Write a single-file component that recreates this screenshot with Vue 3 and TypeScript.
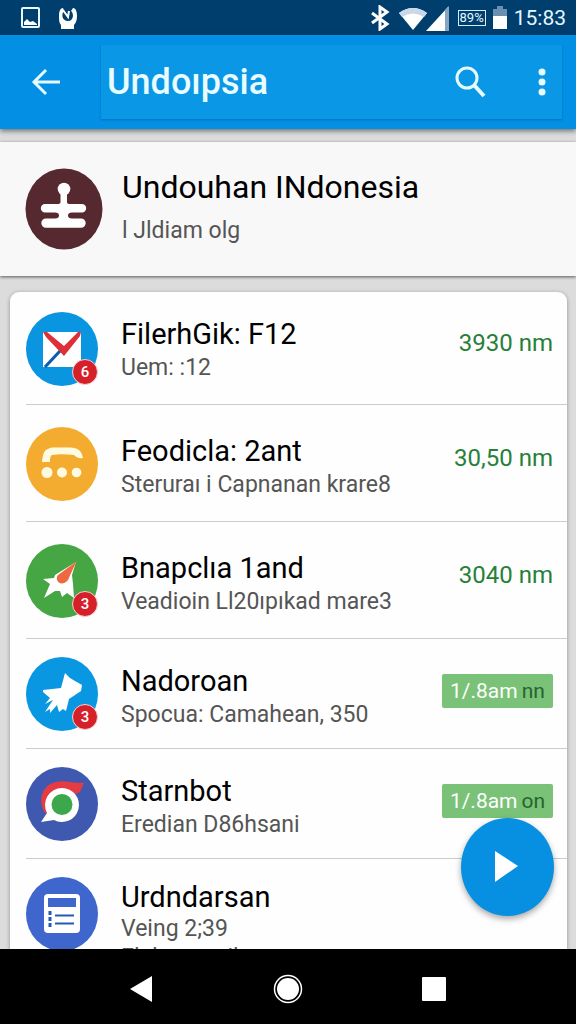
<script setup lang="ts">
type IconName = 'mail' | 'phone' | 'rocket' | 'bird' | 'ring' | 'document'

interface Row {
  icon: IconName
  color: string
  title: string
  detail: string
  extra?: string
  badge?: string
  value?: string
  tag?: [string, string]
}

const rows: Row[] = [
  { icon: 'mail', color: '#0a95e0', title: 'FilerhGik: F12', detail: 'Uem: :12', badge: '6', value: '3930 nm' },
  { icon: 'phone', color: '#f4ac30', title: 'Feodicla: 2ant', detail: 'Steruraı i Capnanan krare8', value: '30,50 nm' },
  { icon: 'rocket', color: '#46a644', title: 'Bnapclıa 1and', detail: 'Veadioin Ll20ıpıkad mare3', badge: '3', value: '3040 nm' },
  { icon: 'bird', color: '#0a97e1', title: 'Nadoroan', detail: 'Spocua: Camahean, 350', badge: '3', tag: ['1/.8am', 'nn'] },
  { icon: 'ring', color: '#4059b0', title: 'Starnbot', detail: 'Eredian D86hsani', tag: ['1/.8am', 'on'] },
  { icon: 'document', color: '#3e66cd', title: 'Urdndarsan', detail: 'Veing 2;39', extra: 'Elabsananil' },
]
</script>

<template>
  <div class="screen">
    <div class="status">
      <svg class="status-left" viewBox="0 0 60 26" aria-hidden="true">
        <rect x="2" y="3" width="17" height="19" rx="1" fill="none" stroke="#e9f8ff" stroke-width="2" />
        <path d="M4 20v-3l3-3 3 3 3-1 4 3v1z" fill="#fff" />
        <path d="M43 3c-3 0-4 4-4 8s0 7 2 9v4h13v-4c2-2 3-5 3-9s-1-8-4-8l-2 3c3 2 3 10-3 10s-7-7-4-10z" fill="#fff" />
        <path d="M43 5l5 7 1-6" fill="none" stroke="#fff" stroke-width="2" />
      </svg>
      <div class="status-right">
        <svg class="status-signals" viewBox="0 0 84 26" aria-hidden="true">
          <path d="M4 8l15 11-7 5V2l7 5L4 18" fill="none" stroke="#fff" stroke-width="3" />
          <path d="M31 8q14-10 28 0L45 25z" fill="#fff" />
          <path d="M31 8q14-10 28 0l-3 4q-11-7-22 0z" fill="#c9d8e8" />
          <path d="M80 2v24H58z" fill="#fff" />
          <path d="M77 5l4-4v25h-4z" fill="#87a5c3" />
        </svg>
        <span class="percent">89%</span>
        <svg class="battery" viewBox="0 0 16 24" aria-hidden="true">
          <path d="M1 3h4V0h6v3h4v8H1z" fill="#6c8fb1" />
          <path d="M1 10h14v13H1z" fill="#fff" />
        </svg>
        <time>15:83</time>
      </div>
    </div>

    <header class="appbar">
      <button class="icon-btn back" type="button" aria-label="Back">
        <svg width="30" height="30" viewBox="0 0 30 30"><path d="M29 15H3M15 3L3 15l12 12" fill="none" stroke="#e6fbff" stroke-width="3" /></svg>
      </button>
      <div class="appbar-panel">
        <h1>Undoıpsia</h1>
        <button class="icon-btn" type="button" aria-label="Search">
          <svg width="32" height="32" viewBox="0 0 32 32" fill="none" stroke="#e6fbff"><circle cx="13" cy="12" r="10" stroke-width="3" /><path d="M20 19l10 11" stroke-width="4" /></svg>
        </button>
        <button class="icon-btn" type="button" aria-label="More options">
          <svg width="10" height="30" viewBox="0 0 10 30" fill="#e6fbff"><circle cx="5" cy="5" r="3.500" /><circle cx="5" cy="15" r="3.500" /><circle cx="5" cy="25" r="3.500" /></svg>
        </button>
      </div>
    </header>

    <main>
      <section class="intro">
        <svg class="intro-icon" viewBox="0 0 78 82" aria-hidden="true">
          <ellipse cx="39" cy="41" rx="38.500" ry="40.500" fill="#55292f" />
          <g fill="#fff">
            <circle cx="39" cy="21" r="6.300" />
            <path d="M35.500 22h6.500v12q0 2 3 2h12a4.200 4.200 0 0 1 0 8.400H47q-4 0-4 3t4 3h9a4.700 4.700 0 0 1 0 9.400H21a4.700 4.700 0 0 1 0-9.400h9q4 0 4-3t-4-3H20a4.200 4.200 0 0 1 0-8.400h12.500q3 0 3-2z" />
          </g>
        </svg>
        <div>
          <h2>Undouhan INdonesia</h2>
          <p>l Jldiam olg</p>
        </div>
      </section>

      <ul class="card">
        <li v-for="row in rows" :key="row.title" class="row">
          <div class="avatar">
            <svg viewBox="0 0 72 74" aria-hidden="true">
              <ellipse cx="36" cy="37" rx="36" ry="37" :fill="row.color" />
              <g v-if="row.icon === 'mail'">
                <path d="M17 20h38v35H17z" fill="#fff" />
                <path d="M19 55l15-16" stroke="#0b5db0" stroke-width="3" />
                <path d="M17 20h4l17 14 14-14h3l-1 4-16 20-18-19z" fill="#dd2f38" />
              </g>
              <g v-else-if="row.icon === 'phone'" fill="#fffbe0">
                <path d="M16 35c1-9 2-13 10-14.500h18c8 0 12 4 13 10.500-4 1-7-1-9-3-8-1-16-1-22 0-2 1-2 4-2 7z" />
                <circle cx="21" cy="45.500" r="5.500" /><circle cx="36" cy="45.500" r="5" /><circle cx="50.500" cy="45.500" r="4.800" />
              </g>
              <g v-else-if="row.icon === 'rocket'">
                <path d="M50 18L29 31l-1 3-11 1 7 5-6 14 11-7h5l2 6 5-4 7 5-1-14-1-9z" fill="#fff" />
                <path d="M50.500 17.500L32 31c-3 4 0 8 3.500 8.500 4 0 7-3 8-7z" fill="#ee6842" />
              </g>
              <path v-else-if="row.icon === 'bird'" d="M39 16l5 5 5 3 7 4-1 6-12 8-3 12-3-2-4 3-2-7-7 8v-4l-5 3 8-12-8 4 5-6-7-6v-2l18-2z" fill="#fff" />
              <g v-else-if="row.icon === 'ring'">
                <path d="M20 47C11 36 15 18 30 15c8-2 14 1 28 1l-4 9-7 3-18 5z" fill="#e43c42" />
                <path d="M36 21a17 17 0 1 1-8 32l-13 2 6-9a17 17 0 0 1 15-25z" fill="#fff" />
                <circle cx="36" cy="37.500" r="10.500" fill="#3da84b" />
              </g>
              <g v-else>
                <rect x="18" y="17" width="36" height="39" rx="4" fill="#fff" />
                <path d="M22 21h28v9H22z" :fill="row.color" />
                <path d="M29 38.500h19M29 46.500h19" stroke="#2559b8" stroke-width="2" />
                <path d="M24 34v17" stroke="#2559b8" stroke-width="3" stroke-dasharray="4 2" />
              </g>
            </svg>
            <span v-if="row.badge" class="badge">{{ row.badge }}</span>
          </div>
          <div class="text">
            <h3>{{ row.title }}</h3>
            <p>{{ row.detail }}</p>
            <p v-if="row.extra">{{ row.extra }}</p>
          </div>
          <span v-if="row.value" class="value">{{ row.value }}</span>
          <span v-if="row.tag" class="tag">{{ row.tag[0] }}<span>{{ row.tag[1] }}</span></span>
        </li>
      </ul>

      <button class="fab" type="button" aria-label="Play">
        <svg width="28" height="32" viewBox="0 0 28 32"><path d="M1 0l23 15L1 31z" fill="#fff" /></svg>
      </button>
    </main>

    <nav>
      <button type="button" aria-label="Back">
        <svg width="24" height="28" viewBox="0 0 24 28"><path d="M22 1v26L0 14z" fill="#fff" /></svg>
      </button>
      <button type="button" aria-label="Home">
        <svg width="30" height="30" viewBox="0 0 30 30"><circle cx="15" cy="15" r="13.500" fill="none" stroke="#fff" stroke-width="1.500" /><circle cx="15" cy="15" r="11" fill="#fff" /></svg>
      </button>
      <button type="button" aria-label="Recent apps">
        <svg width="24" height="24" viewBox="0 0 24 24"><rect width="24" height="24" rx="1" fill="#fff" /></svg>
      </button>
    </nav>
  </div>
</template>

<style>
body {
  margin: 0;
}
</style>

<style scoped>
* {
  box-sizing: border-box;
}

.screen {
  display: flex;
  flex-direction: column;
  height: 100vh;
  overflow: hidden;
  font-family: Roboto, "Liberation Sans", sans-serif;
  color: #000;
}

h1, h2, h3, p, ul {
  margin: 0;
  padding: 0;
  font-weight: 400;
}

button {
  display: grid;
  place-items: center;
  padding: 0;
  border: 0;
  background: none;
  cursor: pointer;
}

svg {
  display: block;
}

.status {
  flex: none;
  display: flex;
  justify-content: space-between;
  align-items: center;
  height: 35px;
  padding: 0 10px 0 20px;
  background: #003e6e;
  color: #e4f7ff;
}

.status-left {
  width: 60px;
  height: 26px;
}

.status-right {
  display: flex;
  align-items: center;
  gap: 6px;
}

.status-signals {
  width: 84px;
  height: 26px;
}

.percent {
  padding: 0 1px;
  border: 1px solid #d5ecf8;
  font-size: 13px;
  line-height: 14px;
}

.battery {
  width: 16px;
  height: 24px;
}

.status time {
  font-size: 21px;
  line-height: 26px;
}

.appbar {
  flex: none;
  position: relative;
  z-index: 1;
  display: flex;
  align-items: center;
  height: 94px;
  padding: 0 14px 0 20px;
  background: #028fe4;
  box-shadow: 0 2px 5px rgba(0, 0, 0, 0.5);
}

.icon-btn {
  width: 52px;
  height: 52px;
}

.appbar-panel {
  flex: 1;
  display: flex;
  align-items: center;
  height: 74px;
  margin-left: 29px;
  padding-left: 6px;
  background: #0a97e6;
  box-shadow: 0 1px 2px rgba(0, 70, 130, 0.4);
}

.appbar-panel h1 {
  flex: 1;
  color: #e9fcff;
  font-size: 36px;
  font-weight: 500;
  line-height: 44px;
}

.appbar-panel .icon-btn:last-child {
  width: 40px;
  margin-left: 26px;
}

main {
  flex: 1;
  position: relative;
  min-height: 0;
  padding-top: 13px;
  overflow: hidden;
  background: #dcdcdd;
}

.intro {
  display: flex;
  align-items: center;
  gap: 19px;
  height: 134px;
  margin-bottom: 16px;
  padding: 0 24px 0 25px;
  background: #f8f8f8;
  box-shadow: 0 1px 3px rgba(0, 0, 0, 0.6);
}

.intro-icon {
  width: 78px;
  height: 82px;
}

.intro h2 {
  font-size: 32px;
  line-height: 44px;
}

.intro p {
  color: #555;
  font-size: 23px;
  line-height: 44px;
}

.card {
  margin: 0 9px 0 10px;
  border-radius: 9px 9px 0 0;
  background: #fefefe;
  box-shadow: 0 1px 4px rgba(0, 0, 0, 0.35);
  list-style: none;
}

.row {
  position: relative;
  display: flex;
  align-items: center;
  gap: 23px;
  height: 117px;
  padding: 0 14px 0 16px;
}

.row:first-child {
  height: 113px;
}

.row:nth-child(n + 4) {
  height: 110px;
}

.row:not(:last-child)::after {
  content: "";
  position: absolute;
  right: 0;
  bottom: 0;
  left: 16px;
  height: 1px;
  background: #ccc;
}

.avatar {
  flex: none;
  position: relative;
  width: 72px;
}

.badge {
  position: absolute;
  right: 0;
  bottom: 1px;
  width: 26px;
  height: 26px;
  border: 1px solid #f6d4d4;
  border-radius: 50%;
  background: #d5202a;
  color: #fff;
  font-size: 15px;
  font-weight: 500;
  line-height: 24px;
  text-align: center;
}

.text {
  flex: 1;
  padding-top: 8px;
  white-space: nowrap;
}

.row:first-child .text {
  padding-top: 4px;
}

.row:last-child .text {
  align-self: flex-start;
  padding-top: 22px;
}

.text h3 {
  font-size: 29px;
  line-height: 33px;
}

.text p {
  color: #555;
  font-size: 23px;
  line-height: 33px;
}

.row:last-child p {
  line-height: 29px;
}

.value {
  color: #27803a;
  font-size: 24px;
  line-height: 32px;
  padding-bottom: 12px;
}

.tag {
  display: flex;
  justify-content: center;
  gap: 4px;
  width: 111px;
  margin-bottom: 6px;
  border-radius: 2px;
  background: #79c277;
  color: #fff;
  font-size: 21px;
  line-height: 34px;
}

.tag span {
  color: #27642d;
}

.fab {
  position: absolute;
  right: 22px;
  bottom: 33px;
  width: 93px;
  height: 98px;
  border-radius: 50%;
  background: #0790e2;
  box-shadow: 0 3px 6px rgba(0, 0, 0, 0.35);
}

nav {
  flex: none;
  display: flex;
  justify-content: center;
  align-items: center;
  gap: 98px;
  height: 75px;
  padding-top: 4px;
  background: #000;
}

nav button {
  width: 48px;
  height: 48px;
}
</style>
